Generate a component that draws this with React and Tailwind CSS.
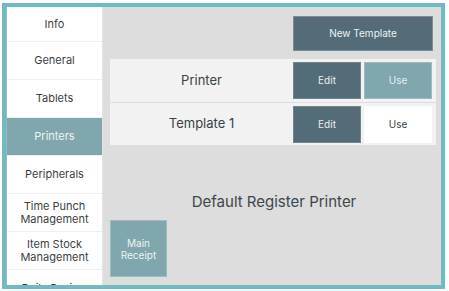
import React from 'react';

const menu = [
  { label: 'Info', first: true },
  { label: 'General' },
  { label: 'Tablets' },
  { label: 'Printers', active: true },
  { label: 'Peripherals' },
  { label: 'Time Punch\nManagement' },
  { label: 'Item Stock\nManagement' },
  { label: 'Daily Review' },
];

const templates = [
  { name: 'Printer', inUse: true },
  { name: 'Template 1', inUse: false },
];

export default function App() {
  return (
    <div className="w-[449px] h-[291px] bg-white overflow-hidden" style={{ fontFamily: 'Inter, "Noto Sans", sans-serif' }}>
      <div className="mt-[3px] ml-[2px] w-[443px] h-[286px] border-4 border-[#6cbcc1] flex overflow-hidden">
        {/* Sidebar */}
        <div className="w-[97px] shrink-0 bg-white border-r border-[#e4e4e4] flex flex-col border-l border-l-[#a9b3b5]">
          {menu.map((m) => (
            <div
              key={m.label}
              className={`${m.first ? 'h-[35px]' : 'h-[38px]'} shrink-0 flex items-center justify-center text-center whitespace-pre-line text-[11px] leading-[13px] border-b border-[#efefef] ${
                m.active ? 'bg-[#7fa7ad] text-[#eef4f5]' : 'text-[#3a3f42]'
              }`}
            >
              {m.label}
            </div>
          ))}
        </div>

        {/* Content */}
        <div className="flex-1 bg-[#dddddd] flex flex-col pt-[9px] pl-[7px] pr-[5px]">
          <div className="flex justify-end pr-[3px]">
            <button className="w-[140px] h-[35px] bg-[#546c77] text-[#eef2f3] text-[10px] border border-[#7d8f96]">
              New Template
            </button>
          </div>

          <div className="mt-[8px] bg-[#f2f2f2] flex flex-col">
            {templates.map((t, i) => (
              <div
                key={t.name}
                className={`h-[43px] flex items-center pr-[4px] ${i > 0 ? 'border-t border-[#dddddd]' : ''}`}
              >
                <div className="flex-1 text-center text-[13px] text-[#3a4246]">{t.name}</div>
                <button className="w-[68px] h-[37px] bg-[#546c77] text-[#e9eff1] text-[10px] border border-[#6f848c]">
                  Edit
                </button>
                <button
                  className={`ml-[3px] w-[68px] h-[37px] text-[10px] ${
                    t.inUse ? 'bg-[#7fa7ad] text-[#e4eef0] border border-[#9cbcc0]' : 'bg-white text-[#3a4246]'
                  }`}
                >
                  Use
                </button>
              </div>
            ))}
          </div>

          <div className="mt-[48px] text-center text-[15px] text-[#3c474c] leading-[18px] -mr-[2px]">
            Default Register Printer
          </div>

          <div className="mt-[9px] w-[57px] h-[57px] bg-[#7fa7ad] border border-[#9cbcc0] flex items-center justify-center text-center text-[10px] leading-[12px] text-[#eef4f5]">
            Main
            <br />
            Receipt
          </div>
        </div>
      </div>
    </div>
  );
}
